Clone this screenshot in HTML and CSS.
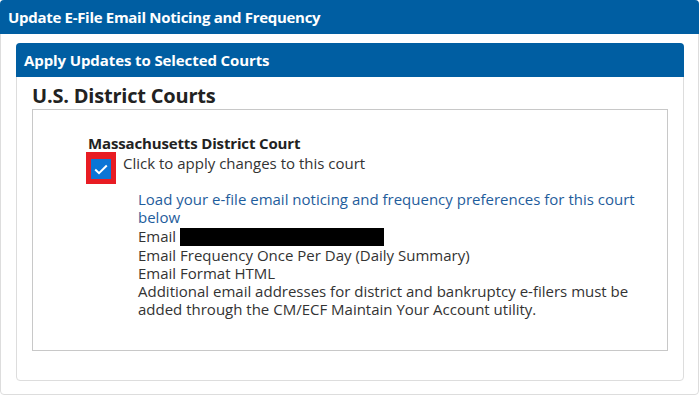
FILE: index.html
```html
<!DOCTYPE html>
<html>
<head>
  <meta charset="UTF-8" />
  <title>Update E-File Email Noticing and Frequency</title>
  <link rel="stylesheet" href="styles.css">
</head>
<body>

  <!-- Outer panel -->
  <div class="panel outer">
    <div class="panel-heading main-heading">Update E-File Email Noticing and Frequency</div>

    <div class="outer-body">
      <!-- Selected courts -->
      <div class="panel inner">
        <div class="panel-heading">Apply Updates to Selected Courts</div>

        <div class="inner-body">
          <h2 class="court-type">U.S. District Courts</h2>

          <div class="court-box">
            <div class="court">
              <div class="court-name">Massachusetts District Court</div>

              <label class="apply-row">
                <span class="check-outline">
                  <span class="check">
                    <svg width="14" height="11" viewBox="0 0 14 11">
                      <path d="M1.2 5.6 L5 9.2 L12.8 1.5" fill="none" stroke="#fff" stroke-width="2" />
                    </svg>
                  </span>
                </span>
                <span>Click to apply changes to this court</span>
              </label>

              <div class="prefs">
                <div class="load-link">Load your e-file email noticing and frequency preferences for this court below</div>
                <div>Email <span class="redacted"></span></div>
                <div>Email Frequency Once Per Day (Daily Summary)</div>
                <div>Email Format HTML</div>
                <div>Additional email addresses for district and bankruptcy e-filers must be added through the CM/ECF Maintain Your Account utility.</div>
              </div>
            </div>
          </div>
        </div>
      </div>
    </div>
  </div>

</body>
</html>
```

FILE: styles.css
```css
body {
  margin: 0;
  width: 699px;
  font-family: "Open Sans", "Liberation Sans", sans-serif;
  font-size: 15px;
  color: #333;
  background: white;
}

.panel {
  border: 1px solid #ddd;
  border-radius: 4px;
  background: white;
}

.outer {
  height: 393px;
}

.panel-heading {
  margin: -1px -1px 0;
  padding: 8px;
  height: 18px;
  line-height: 18px;
  background: #005ea2;
  color: white;
  font-weight: bold;
  font-size: 15px;
  letter-spacing: -0.1px;
  border-radius: 4px 4px 0 0;
}

.main-heading {
  letter-spacing: -0.3px;
}

.outer-body {
  padding: 9px 14px 13px 15px;
}

.inner {
  height: 336px;
}

.inner-body {
  padding: 6px 15px 0 15px;
}

/* District heading */
.court-type {
  margin: 0;
  font-size: 20px;
  line-height: 26px;
  letter-spacing: -0.2px;
  color: #222;
}

.court-box {
  border: 1px solid #c8c8c8;
  height: 240px;
}

.court {
  padding: 24px 20px 0 55px;
  line-height: 18.2px;
}

.court-name {
  font-weight: bold;
  letter-spacing: -0.15px;
  color: #222;
}

.apply-row {
  display: flex;
  align-items: flex-start;
  gap: 7px;
}

.apply-row span:last-child {
  margin-top: 2px;
}

/* focus ring round the checkbox */
.check-outline {
  display: block;
  margin-left: -2px;
  padding: 5px;
  background: #e81c23;
}

.check {
  display: flex;
  align-items: center;
  justify-content: center;
  width: 20px;
  height: 20px;
  background: #0b75d6;
}

.prefs {
  margin-top: 6px;
  padding-left: 50px;
  width: 500px;
}

.load-link {
  color: #1f5d9c;
}

.redacted {
  display: inline-block;
  width: 204px;
  height: 18px;
  background: #000;
  vertical-align: -4px;
}
```
